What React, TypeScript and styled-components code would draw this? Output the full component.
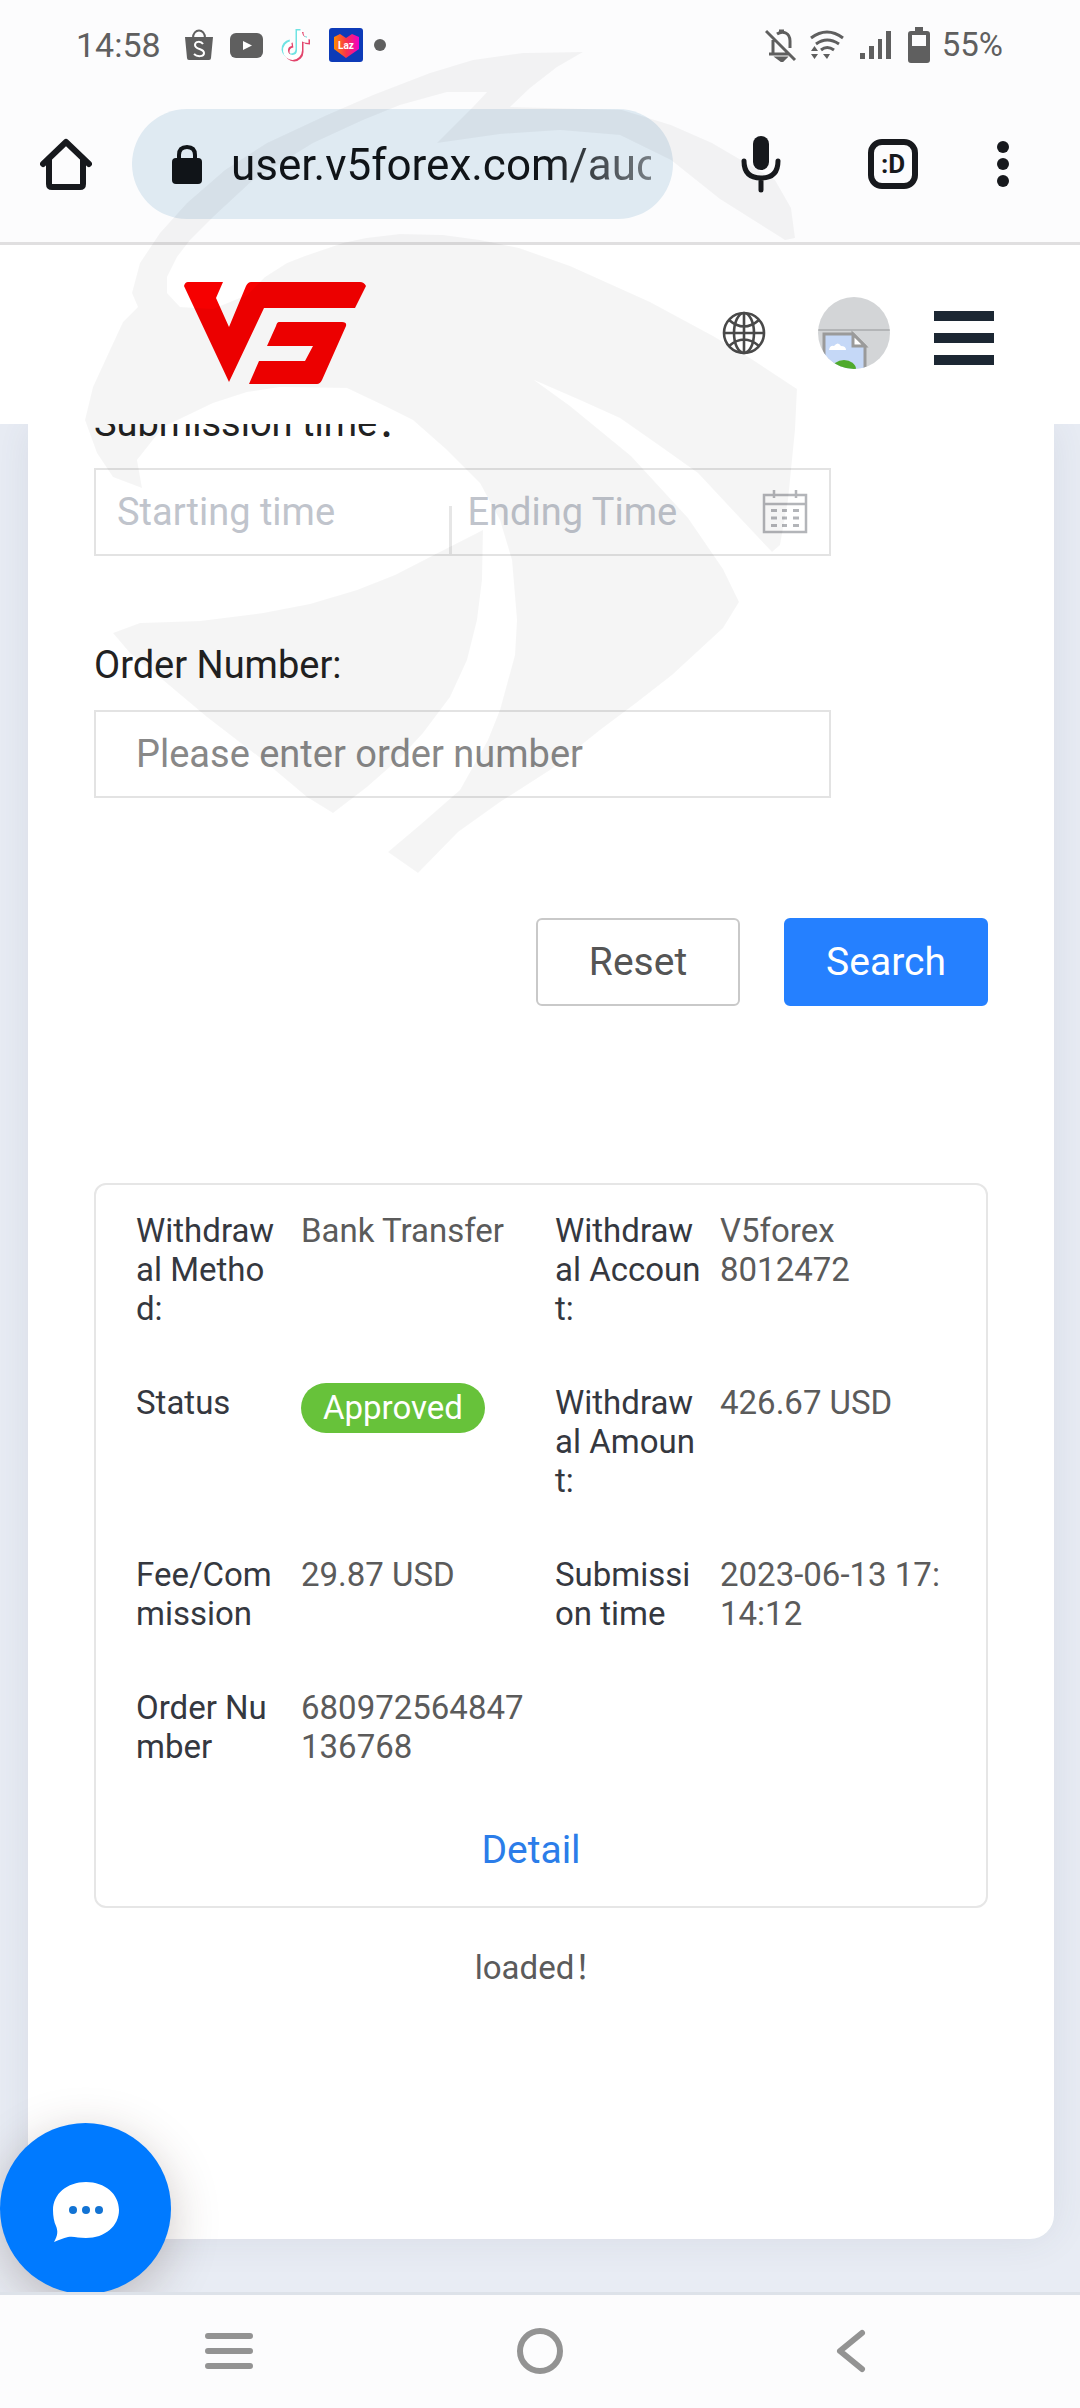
import React from "react";
import styled, { createGlobalStyle } from "styled-components";

const font = `Roboto, "Noto Sans CJK SC", sans-serif`;

const GlobalStyle = createGlobalStyle`
  *, *::before, *::after { box-sizing: border-box; }
  body { margin: 0; background: #fcfcfd; }
  button, input { font-family: ${font}; }
`;

const Screen = styled.div`
  position: relative;
  display: flex;
  flex-direction: column;
  min-height: 100vh;
  overflow: hidden;
  font-family: ${font};
  color: #222;
`;

const Row = styled.div<{ $gap?: number }>`
  display: flex;
  align-items: center;
  gap: ${(p) => p.$gap ?? 0}px;
`;

const StatusBar = styled.div`
  display: flex;
  align-items: center;
  justify-content: space-between;
  height: 90px;
  padding: 0 77px 0 76px;
  font-size: 33px;
  line-height: 40px;
  color: #5f5f5f;
  svg { display: block; }
`;

const Clock = styled.span`
  margin-right: 13px;
  font-size: 34px;
`;

const Toolbar = styled.div`
  display: flex;
  align-items: center;
  height: 155px;
  padding: 0 63px 4px 33px;
  border-bottom: 3px solid #e0dfe0;
`;

const IconButton = styled.button`
  display: flex;
  align-items: center;
  justify-content: center;
  flex: none;
  padding: 0;
  border: 0;
  background: none;
  color: #17191d;
  svg { display: block; }
`;

const HomeButton = styled(IconButton)`
  width: 66px;
  height: 66px;
`;

const AddressBar = styled.div`
  display: flex;
  align-items: center;
  flex: 1;
  min-width: 0;
  height: 110px;
  margin: 0 52px 0 33px;
  padding: 2px 22px 0 40px;
  border-radius: 55px;
  background: #dfeaf2;
  svg { flex: none; }
`;

const Url = styled.div`
  flex: 1;
  min-width: 0;
  margin-left: 29px;
  overflow: hidden;
  white-space: nowrap;
  font-size: 44px;
  line-height: 56px;
  color: #101418;
  mask-image: linear-gradient(to right, #000 75%, rgba(0, 0, 0, 0.5) 100%);
`;

const BrowserActions = styled.div`
  display: flex;
  align-items: center;
  gap: 71px;
`;

const MicButton = styled(IconButton)`
  width: 72px;
  height: 66px;
`;

const TabsButton = styled(IconButton)`
  width: 50px;
  height: 50px;
  border: 6px solid #17191d;
  border-radius: 14px;
  font-size: 26px;
  line-height: 30px;
  font-weight: 700;
`;

const MoreButton = styled(IconButton)`
  width: 28px;
  height: 66px;
`;

const SiteHeader = styled.header`
  position: relative;
  z-index: 1;
  display: flex;
  align-items: center;
  justify-content: space-between;
  height: 179px;
  padding: 0 86px 4px 184px;
  background: #fff;
  svg { display: block; }
`;

const HeaderActions = styled.div`
  display: flex;
  align-items: center;
`;

const Avatar = styled(IconButton)`
  width: 72px;
  height: 72px;
  margin: 0 44px 0 52px;
  border-radius: 50%;
  overflow: hidden;
`;

const Main = styled.main`
  position: relative;
  display: flex;
  flex: 1;
  padding: 0 26px 53px 28px;
  overflow: hidden;
  background: #e8ecf4;
`;

const Panel = styled.section`
  display: flex;
  flex-direction: column;
  flex: 1;
  min-width: 0;
  padding: 0 66px 66px 66px;
  border-radius: 0 0 24px 24px;
  background: #fff;
  box-shadow: 0 0 40px rgba(60, 70, 90, 0.09);
`;

const Filters = styled.form`
  display: flex;
  flex-direction: column;
  gap: 86px;
  margin-top: -24px;
`;

const Field = styled.div`
  display: flex;
  flex-direction: column;
  gap: 22px;
  width: calc(100% - 157px);
`;

const Label = styled.label`
  font-size: 38px;
  line-height: 46px;
  color: #222;
`;

const TextInput = styled.input`
  width: 100%;
  height: 88px;
  padding: 0 40px;
  border: 2px solid #e3e3e3;
  border-radius: 0;
  outline: 0;
  background: none;
  font-size: 38px;
  color: #222;
  &::placeholder { color: #888; opacity: 1; }
`;

const DateRange = styled.div`
  display: flex;
  align-items: center;
  height: 88px;
  padding: 0 21px;
  border: 2px solid #e3e3e3;
  svg { flex: none; display: block; }
`;

const DateInput = styled.input`
  flex: 1;
  min-width: 0;
  height: 84px;
  padding: 0;
  border: 0;
  outline: 0;
  background: none;
  font-size: 38px;
  color: #222;
  &::placeholder { color: #c0c4cc; opacity: 1; }
`;

const DateDivider = styled.span`
  align-self: flex-end;
  flex: none;
  width: 3px;
  height: 48px;
  margin: 0 16px 0 37px;
  background: #e6e6e6;
`;

const Actions = styled.div`
  display: flex;
  justify-content: flex-end;
  gap: 44px;
  margin-top: 34px;
`;

const Button = styled.button<{ $primary?: boolean }>`
  min-width: 204px;
  height: 88px;
  padding: 0 40px;
  border: 2px solid ${(p) => (p.$primary ? "#2580ff" : "#c9c9c9")};
  border-radius: 6px;
  background: ${(p) => (p.$primary ? "#2580ff" : "#fff")};
  color: ${(p) => (p.$primary ? "#fff" : "#555")};
  font-size: 39px;
  line-height: 46px;
`;

const Card = styled.article`
  display: flex;
  flex-direction: column;
  margin-top: 177px;
  padding: 26px 12px 33px 40px;
  border: 2px solid #e6e6e6;
  border-radius: 12px;
`;

const Details = styled.dl`
  display: grid;
  grid-template-columns: 1fr 1fr;
  row-gap: 55px;
  margin: 0;
  font-size: 33px;
  line-height: 39px;
`;

const Entry = styled.div`
  display: grid;
  grid-template-columns: 150px 232px;
  column-gap: 15px;
  word-break: break-all;
`;

const Term = styled.dt`
  color: #35383f;
`;

const Value = styled.dd`
  margin: 0;
  color: #5b5b5b;
`;

const Badge = styled.span`
  display: inline-block;
  padding: 0 22px;
  border-radius: 25px;
  background: #67c23a;
  color: #fff;
  line-height: 50px;
  vertical-align: top;
`;

const DetailLink = styled.a`
  align-self: center;
  margin: 61px 48px 0 0;
  font-size: 39px;
  line-height: 46px;
  color: #2b7de9;
  text-decoration: none;
`;

const ListEnd = styled.p`
  margin: 40px 0 0;
  font-size: 33px;
  line-height: 39px;
  text-align: center;
  color: #5b5b5b;
`;

const ChatButton = styled.button`
  position: absolute;
  left: 0;
  bottom: -2px;
  display: flex;
  align-items: center;
  justify-content: center;
  width: 171px;
  height: 171px;
  padding: 6px 0 0;
  border: 0;
  border-radius: 50%;
  background: #007aff;
  box-shadow: 0 12px 48px rgba(60, 40, 30, 0.26);
`;

const NavBar = styled.nav`
  display: flex;
  align-items: center;
  justify-content: space-around;
  height: 116px;
  padding: 0 74px 2px;
  border-top: 3px solid #dde2e9;
  background: #fcfcfd;
`;

const NavButton = styled(IconButton)`
  width: 96px;
  height: 80px;
  color: #939393;
`;

const Watermark = styled.svg`
  position: absolute;
  z-index: 2;
  top: 0;
  left: 0;
  pointer-events: none;
`;

const details: { term: string; value: React.ReactNode }[] = [
  { term: "Withdrawal Method:", value: "Bank Transfer" },
  { term: "Withdrawal Account:", value: <>V5forex<br />8012472</> },
  { term: "Status", value: <Badge>Approved</Badge> },
  { term: "Withdrawal Amount:", value: "426.67 USD" },
  { term: "Fee/Commission", value: "29.87 USD" },
  { term: "Submission time", value: "2023-06-13 17:14:12" },
  { term: "Order Number", value: "680972564847136768" },
];

const NoteShape = ({ color, dx, dy }: { color: string; dx: number; dy: number }) => (
  <path
    transform={`translate(${dx} ${dy})`}
    d="M17 0v20a7 7 0 1 1-8-7M17 2c1 5 4 8 9 8"
    fill="none"
    stroke={color}
    strokeWidth="5"
  />
);

const AppIcons = () => (
  <Row $gap={17}>
    <svg width="28" height="32" viewBox="0 0 28 32">
      <path d="M8 9c0-10 12-10 12 0" fill="none" stroke="#5f5f5f" strokeWidth="2" />
      <path d="M0 8h28l-2 21q0 2-2 2H4q-2 0-2-2z" fill="#5f5f5f" />
      <path d="M18 15c-2-3-8-3-8 1 0 5 9 3 9 8 0 4-7 4-10 1" fill="none" stroke="#fff" strokeWidth="2" />
    </svg>
    <svg width="33" height="25" viewBox="0 0 33 25">
      <rect width="33" height="25" rx="6" fill="#5f5f5f" />
      <path d="M13 8v9l9-4.500z" fill="#fff" />
    </svg>
    <svg width="32" height="35" viewBox="0 0 32 35">
      <NoteShape color="#6fe3e3" dx={1} dy={1} />
      <NoteShape color="#e2436b" dx={4} dy={4} />
      <NoteShape color="#fff" dx={2.5} dy={2.5} />
    </svg>
    <svg width="34" height="34" viewBox="0 0 34 34">
      <defs>
        <linearGradient id="heart" x1="0" x2="1">
          <stop offset="0" stopColor="#ff8a00" />
          <stop offset="0.5" stopColor="#f8324c" />
          <stop offset="1" stopColor="#f000c8" />
        </linearGradient>
      </defs>
      <rect width="34" height="34" rx="3" fill="#0d3bb8" />
      <path d="M5 9l6-3 6 4 6-4 7 3v12l-13 9-12-9z" fill="url(#heart)" />
      <text x="17" y="21" textAnchor="middle" fontSize="10" fontWeight="700" fill="#fff">Laz</text>
    </svg>
  </Row>
);

const BellOff = () => (
  <svg width="32" height="34" viewBox="0 0 32 34" fill="none" stroke="#5f5f5f" strokeWidth="3">
    <path d="M1 3l29 29M4 26h20M8 25V12M12 6c6-4 13-1 13 7v7" />
    <path d="M14 3h5M13 30h7l-3 3z" />
  </svg>
);

const Wifi = () => (
  <svg width="34" height="30" viewBox="0 0 34 30" fill="none" stroke="#5f5f5f" strokeWidth="3">
    <path d="M1 8q16-12 32 0M6 14q11-8 23 0M11 20q6-5 13 0" />
    <path d="M13 24h7l-3 5zM1 21h7l-3.500-5zM1 24h7l-3.500 5z" fill="#5f5f5f" stroke="none" />
  </svg>
);

const Signal = () => (
  <svg width="32" height="30" viewBox="0 0 32 30" fill="#5f5f5f">
    <path d="M0 23h5v6H0zM9 16h5v13H9zM18 9h4v20h-4zM26 1h5v28h-5z" />
  </svg>
);

const Battery = () => (
  <svg width="22" height="36" viewBox="0 0 22 36" fill="#5f5f5f">
    <path
      fillRule="evenodd"
      d="M7 0h8v4h4q3 0 3 3v26q0 3-3 3H3q-3 0-3-3V7q0-3 3-3h4zM4 8v11h14V8z"
    />
  </svg>
);

const Logo = () => (
  <svg width="182" height="102" viewBox="0 0 182 102" fill="#f60000" role="img" aria-label="V5">
    <path d="M4 0h35l-7 16 13 29L62 4q2-4 5-4h109q4 0 6 4l-11 22H80L45 100 0 4q1-4 4-4z" />
    <path d="M95 40h63q5 0 4 4l-24 54q-2 4-5 4H65l10-23h46l8-15H83l9-20q1-4 3-4z" />
  </svg>
);

const Globe = () => (
  <svg width="44" height="44" viewBox="0 0 44 44" fill="none" stroke="#494949" strokeWidth="2.600">
    <circle cx="22" cy="22" r="20" />
    <ellipse cx="22" cy="22" rx="10" ry="20" />
    <path d="M22 2v40M2 22h40M7 9q15 13 30 0M7 35q15-13 30 0" />
  </svg>
);

const BrokenImage = () => (
  <svg width="72" height="74" viewBox="0 0 72 74">
    <rect width="72" height="74" fill="#d3d5d7" />
    <path d="M0 34h72" stroke="#b3b5b7" strokeWidth="2" />
    <path d="M6 38h29l12 12v26H6z" fill="#c5d8f7" stroke="#9a9a9a" strokeWidth="3" />
    <path d="M35 38v12h12z" fill="#fff" stroke="#9a9a9a" strokeWidth="3" />
    <path d="M11 54q1-5 5-4 4-5 7 0 5 0 5 4z" fill="#fff" />
    <ellipse cx="26" cy="73" rx="12" ry="9" fill="#4faa2c" />
  </svg>
);

const Hamburger = () => (
  <svg width="60" height="64" viewBox="0 0 60 64" fill="#1c2733">
    <path d="M0 10h60v10H0zM0 32h60v10H0zM0 54h60v10H0z" />
  </svg>
);

const Calendar = () => (
  <svg width="46" height="44" viewBox="0 0 46 44" fill="none" stroke="#b3b5b9">
    <path d="M2 5h42v37H2zM2 14h42" strokeWidth="2.500" />
    <path d="M12 0v8M34 0v8" strokeWidth="2.500" />
    <path d="M9 20.500h6M20 20.500h5M31 20.500h6M9 28h6M20 28h5M31 28h6M9 35.500h6M20 35.500h5M31 35.500h6" strokeWidth="3" />
  </svg>
);

const ChatBubble = () => (
  <svg width="68" height="62" viewBox="0 0 68 62">
    <path
      d="M34 1c19 0 33 12 33 28S53 57 34 57c-8 0-12-2-18-1-5 1-9 3-14 5 4-7 4-11 2-16-2-4-3-10-3-16C1 13 15 1 34 1z"
      fill="#fff"
    />
    <g fill="#1273d4">
      <circle cx="21" cy="29" r="4" />
      <circle cx="34" cy="29" r="4" />
      <circle cx="47" cy="29" r="4" />
    </g>
  </svg>
);

const EagleMark = () => (
  <Watermark width="830" height="900" viewBox="0 0 830 900" fill="#000" fillOpacity="0.04" aria-hidden="true">
    <path d="M583 52 523 53 473 60 430 73 373 95 327 115 267 143 225 170 187 203 160 233 140 263 132 293 138 307 123 322 110 350 93 387 85 420 97 453 113 477 142 488 137 460 163 427 213 403 247 392 280 387 347 388 387 407 413 420 447 450 480 483 500 520 512 560 517 620 515 655 500 710 488 740 460 790 420 825 388 852 418 873 458 832 500 802 550 770 600 730 636 703 672 675 723 628 739 602 723 569 688 518 631 456 570 406 534 380 580 400 620 418 660 446 698 473 740 518 772 552 780 545 788 500 795 430 797 389 750 358 713 336 650 302 570 266 519 248 480 240 443 235 400 234 366 238 343 243 305 256 287 263 265 277 247 295 213 309 180 307 167 293 167 277 177 257 190 240 213 217 253 180 313 143 363 120 400 105 447 92 487 92 473 107 437 143 500 134 560 130 620 135 671 160 720 199 785 240 795 238 791 208 775 180 712 143 671 125 622 110 510 107 530 88 557 67z" />
    <path d="M113 633 140 623 200 621 263 613 310 604 357 590 395 575 430 557 483 530 482 580 477 620 467 660 450 697 423 733 400 758 367 787 333 813 307 797 263 760 207 717 163 680 130 653z" />
  </Watermark>
);

export default function App() {
  return (
    <>
      <GlobalStyle />
      <Screen>
        <StatusBar>
          <Row $gap={11}>
            <Clock>14:58</Clock>
            <AppIcons />
            <svg width="12" height="12" viewBox="0 0 12 12" fill="#5f5f5f">
              <circle cx="6" cy="6" r="6" />
            </svg>
          </Row>
          <Row $gap={16}>
            <Row $gap={13}>
              <BellOff />
              <Wifi />
            </Row>
            <Signal />
            <Row $gap={12}>
              <Battery />
              <span>55%</span>
            </Row>
          </Row>
        </StatusBar>

        <Toolbar>
          <HomeButton type="button" aria-label="Home">
            <svg width="52" height="52" viewBox="0 0 52 52" fill="none" stroke="currentColor" strokeWidth="6" strokeLinecap="round" strokeLinejoin="round">
              <path d="M3 26L26 4l23 22M9 22v24q0 3 3 3h28q3 0 3-3V22" />
            </svg>
          </HomeButton>
          <AddressBar>
            <svg width="30" height="40" viewBox="0 0 30 40">
              <path d="M7 16V10q0-8 8-8t8 8v6" fill="none" stroke="#101418" strokeWidth="4" />
              <rect y="13" width="30" height="26" rx="4" fill="#101418" />
            </svg>
            <Url>user.v5forex.com/auc</Url>
          </AddressBar>
          <BrowserActions>
            <MicButton type="button" aria-label="Voice search">
              <svg width="40" height="58" viewBox="0 0 40 58" fill="none" stroke="currentColor" strokeWidth="5" strokeLinecap="round">
                <rect x="12" y="1" width="16" height="34" rx="8" fill="currentColor" stroke="none" />
                <path d="M3 26q0 17 17 17t17-17M20 43v12" />
              </svg>
            </MicButton>
            <TabsButton type="button" aria-label="Open tabs">:D</TabsButton>
            <MoreButton type="button" aria-label="More">
              <svg width="12" height="46" viewBox="0 0 12 46" fill="currentColor">
                <circle cx="6" cy="6" r="6" />
                <circle cx="6" cy="23" r="6" />
                <circle cx="6" cy="40" r="6" />
              </svg>
            </MoreButton>
          </BrowserActions>
        </Toolbar>

        <SiteHeader>
          <Logo />
          <HeaderActions>
            <IconButton type="button" aria-label="Language">
              <Globe />
            </IconButton>
            <Avatar type="button" aria-label="Account">
              <BrokenImage />
            </Avatar>
            <IconButton type="button" aria-label="Menu">
              <Hamburger />
            </IconButton>
          </HeaderActions>
        </SiteHeader>

        <Main>
          <Panel>
            <Filters>
              <Field>
                <Label htmlFor="start">Submission time：</Label>
                <DateRange>
                  <DateInput id="start" placeholder="Starting time" />
                  <DateDivider />
                  <DateInput aria-label="Ending Time" placeholder="Ending Time" />
                  <Calendar />
                </DateRange>
              </Field>
              <Field>
                <Label htmlFor="order">Order Number:</Label>
                <TextInput id="order" placeholder="Please enter order number" />
              </Field>
              <Actions>
                <Button type="reset">Reset</Button>
                <Button type="button" $primary>Search</Button>
              </Actions>
            </Filters>

            <Card>
              <Details>
                {details.map((d) => (
                  <Entry key={d.term}>
                    <Term>{d.term}</Term>
                    <Value>{d.value}</Value>
                  </Entry>
                ))}
              </Details>
              <DetailLink href="#detail">Detail</DetailLink>
            </Card>
            <ListEnd>loaded！</ListEnd>
          </Panel>
          <ChatButton type="button" aria-label="Chat">
            <ChatBubble />
          </ChatButton>
        </Main>

        <NavBar>
          <NavButton type="button" aria-label="Recent apps">
            <svg width="48" height="38" viewBox="0 0 48 38" fill="none" stroke="currentColor" strokeWidth="6" strokeLinecap="round">
              <path d="M3 4h42M3 19h42M3 34h42" />
            </svg>
          </NavButton>
          <NavButton type="button" aria-label="Home screen">
            <svg width="48" height="48" viewBox="0 0 48 48" fill="none" stroke="currentColor" strokeWidth="6">
              <circle cx="24" cy="24" r="20" />
            </svg>
          </NavButton>
          <NavButton type="button" aria-label="Back">
            <svg width="30" height="44" viewBox="0 0 30 44" fill="none" stroke="currentColor" strokeWidth="6" strokeLinecap="round" strokeLinejoin="round">
              <path d="M26 4L4 22l22 18" />
            </svg>
          </NavButton>
        </NavBar>
        <EagleMark />
      </Screen>
    </>
  );
}
